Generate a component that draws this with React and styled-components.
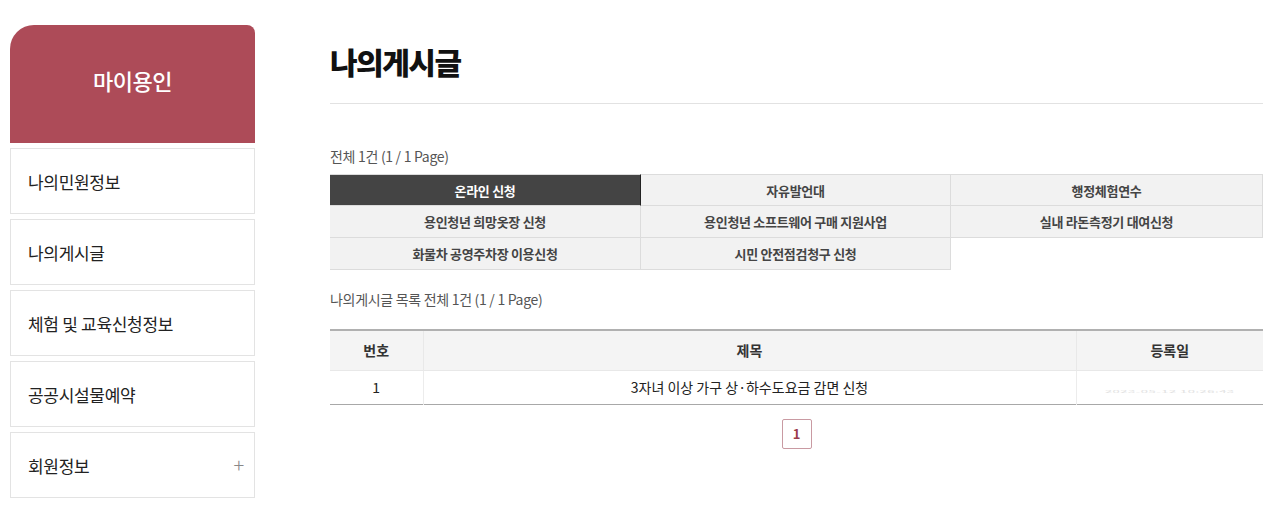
import React from "react";
import styled, { createGlobalStyle } from "styled-components";

const Global = createGlobalStyle`
  html, body { margin: 0; padding: 0; background: #fff; }
  body { font-family: "Noto Sans CJK KR", "Noto Sans", sans-serif; color: #222; }
  * { box-sizing: border-box; }
`;

const Page = styled.div`
  display: flex;
  align-items: flex-start;
  padding: 25px 17px 0 10px;
  gap: 75px;
`;

const Sidebar = styled.aside`
  width: 245px;
  flex-shrink: 0;
  display: flex;
  flex-direction: column;
  gap: 5px;
`;

const SideHead = styled.div`
  height: 118px;
  padding-bottom: 8px;
  background: #ad4b58;
  border-radius: 24px 8px 0 0;
  display: flex;
  align-items: center;
  justify-content: center;
  color: #fff;
  font-size: 22px;
  font-weight: 500;
  letter-spacing: -0.5px;
`;

const MenuItem = styled.div`
  height: 66px;
  border: 1px solid #e3e3e3;
  display: flex;
  align-items: center;
  justify-content: space-between;
  padding: 0 10px 0 17px;
  font-size: 17px;
  color: #222;
  letter-spacing: -0.3px;
`;

const Plus = styled.span`
  color: #888;
  font-size: 20px;
  font-weight: 300;
  line-height: 1;
`;

const Main = styled.main`
  flex: 1;
  min-width: 0;
`;

const Title = styled.h2`
  margin: 0;
  padding: 18px 0 24px;
  font-size: 30px;
  font-weight: 900;
  color: #111;
  letter-spacing: -1.5px;
  line-height: 36px;
  border-bottom: 1px solid #e2e2e2;
`;

const Count = styled.p`
  margin: 42px 0 8px;
  font-size: 14px;
  color: #555;
  line-height: 20px;
  letter-spacing: -0.3px;
`;

const TabGrid = styled.div`
  display: grid;
  grid-template-columns: 311px 310px 1fr;
`;

const Tab = styled.div`
  height: 32px;
  display: flex;
  align-items: center;
  justify-content: center;
  font-size: 13px;
  font-weight: 700;
  letter-spacing: -0.3px;
  background: ${(p) => (p.$active ? "#444" : "#f2f2f2")};
  color: ${(p) => (p.$active ? "#fff" : "#444")};
  border-right: 1px solid ${(p) => (p.$active ? "#222" : "#dcdcdc")};
  border-bottom: 1px solid #dcdcdc;
  border-top: ${(p) => (p.$first ? "1px solid #dcdcdc" : "none")};
`;

const ListCount = styled.p`
  margin: 19px 0 20px;
  font-size: 14px;
  color: #555;
  line-height: 20px;
  letter-spacing: -0.3px;
`;

const Table = styled.table`
  width: 100%;
  border-collapse: collapse;
  border-top: 2px solid #b0b0b0;
  border-bottom: 1px solid #a8a8a8;
  font-size: 14px;
`;

const Th = styled.th`
  height: 40px;
  background: #f4f4f4;
  color: #333;
  font-weight: 700;
  font-size: 14px;
  width: ${(p) => p.$w || "auto"};
  border-left: ${(p) => (p.$first ? "none" : "1px solid #e8e8e8")};
  border-bottom: 1px solid #e8e8e8;
`;

const Td = styled.td`
  height: 34px;
  padding: ${(p) => (p.$bottom ? "0 0 3px" : "0")};
  vertical-align: ${(p) => (p.$bottom ? "bottom" : "middle")};
  text-align: center;
  color: #222;
  font-size: 14px;
  border-left: ${(p) => (p.$first ? "none" : "1px solid #ececec")};
`;

const Faint = styled.span`
  display: inline-block;
  color: #e2e2e2;
  font-size: 13px;
  line-height: 14px;
  letter-spacing: 0.5px;
  transform: scaleY(0.25);
`;

const Pager = styled.div`
  display: flex;
  justify-content: center;
  padding-top: 14px;
`;

const PageBtn = styled.span`
  width: 30px;
  height: 30px;
  border: 1px solid #c99aa2;
  border-radius: 2px;
  display: flex;
  align-items: center;
  justify-content: center;
  color: #9b3c4a;
  font-size: 13px;
  font-weight: 700;
`;

const menus = ["나의민원정보", "나의게시글", "체험 및 교육신청정보", "공공시설물예약", "회원정보"];
const tabs = [
  "온라인 신청",
  "자유발언대",
  "행정체험연수",
  "용인청년 희망옷장 신청",
  "용인청년 소프트웨어 구매 지원사업",
  "실내 라돈측정기 대여신청",
  "화물차 공영주차장 이용신청",
  "시민 안전점검청구 신청",
];

export default function App() {
  return (
    <>
      <Global />
      <Page>
        <Sidebar>
          <SideHead>마이용인</SideHead>
          {menus.map((m, i) => (
            <MenuItem key={m}>
              <span>{m}</span>
              {i === menus.length - 1 && <Plus>+</Plus>}
            </MenuItem>
          ))}
        </Sidebar>
        <Main>
          <Title>나의게시글</Title>
          <Count>전체 1건 (1 / 1 Page)</Count>
          <TabGrid>
            {tabs.map((t, i) => (
              <Tab key={t} $active={i === 0} $first={i < 3}>
                {t}
              </Tab>
            ))}
          </TabGrid>
          <ListCount>나의게시글 목록 전체 1건 (1 / 1 Page)</ListCount>
          <Table>
            <thead>
              <tr>
                <Th $first $w="93px">번호</Th>
                <Th>제목</Th>
                <Th $w="187px">등록일</Th>
              </tr>
            </thead>
            <tbody>
              <tr>
                <Td $first>1</Td>
                <Td>3자녀 이상 가구 상·하수도요금 감면 신청</Td>
                <Td $bottom>
                  <Faint>2023-05-12 10:26:43</Faint>
                </Td>
              </tr>
            </tbody>
          </Table>
          <Pager>
            <PageBtn>1</PageBtn>
          </Pager>
        </Main>
      </Page>
    </>
  );
}
